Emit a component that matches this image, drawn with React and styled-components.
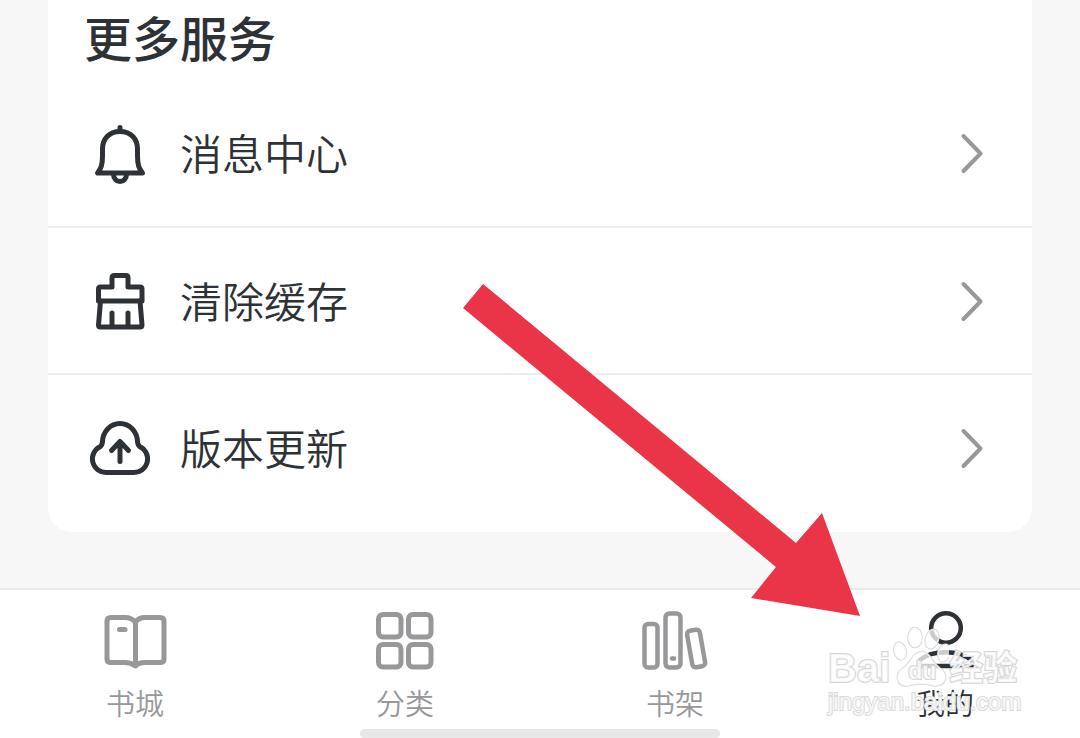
import React from 'react'
import styled, { createGlobalStyle } from 'styled-components'

/***** Component style *****/
const GlobalStyle = createGlobalStyle`
	* {
		box-sizing:border-box;
	}
	body {
		margin:0;
		background-color:#f7f7f7;
		color:#2e3236;
		font-family:"Noto Sans CJK SC", sans-serif;
	}
	button {
		font:inherit;
		color:inherit;
		border:none;
		background:none;
		cursor:pointer;
	}
`
const Page = styled.div`
	position:relative;
	min-height:100vh;
	display:flex;
	flex-direction:column;
	justify-content:space-between;
	overflow:hidden;
`
const Card = styled.section`
	margin:0 48px;
	padding-bottom:12px;
	background-color:#fff;
	border-radius:0 0 24px 24px;
`
const CardTitle = styled.h2`
	margin:0;
	padding:0 36px 8px;
	font-size:48px;
	line-height:72px;
	font-weight:500;
`
const ServiceList = styled.ul`
	margin:0;
	padding:0;
	list-style:none;
`
const ServiceItem = styled.li`
	& + & {
		border-top:2px solid #eeeeee;
	}
`
const ServiceButton = styled.button`
	width:100%;
	height:146px;
	padding:0 48px 0 42px;
	display:flex;
	align-items:center;
	gap:30px;
	text-align:left;

	${ServiceItem} + ${ServiceItem} & {
		height:145px;
	}
`
const ServiceName = styled.span`
	flex:1;
	padding-bottom:2px;
	font-size:42px;
	line-height:60px;
	font-weight:350;
`
const Drawing = styled.svg`
	display:block;
	flex:none;
	overflow:visible;
	fill:none;
	stroke:currentColor;
	stroke-width:${props => props.$stroke || 5};
	stroke-linecap:round;
	stroke-linejoin:round;
`
const Chevron = styled(Drawing)`
	color:#97989b;
`
const BottomBar = styled.footer`
	height:150px;
	display:flex;
	flex-direction:column;
	background-color:#fff;
	border-top:2px solid #e9e9e9;
`
const TabList = styled.nav`
	flex:1;
	display:flex;
`
const Tab = styled.button`
	flex:1;
	padding:16px 0 0;
	display:flex;
	flex-direction:column;
	align-items:center;
	gap:10px;
	color:${props => props.$active ? '#2e3236' : '#97989a'};
`
const TabName = styled.span`
	font-size:29px;
	line-height:40px;
	font-weight:350;
`
const HomeIndicator = styled.div`
	width:33.333%;
	height:9px;
	align-self:center;
	border-radius:5px;
	background-color:#e7e7e7;
`
const Arrow = styled.svg`
	position:absolute;
	right:220px;
	bottom:121px;
	pointer-events:none;
`
const Watermark = styled.div`
	position:absolute;
	right:56px;
	bottom:22px;
	width:196px;
	color:rgba(255, 255, 255, .75);
	font-family:"Liberation Sans", "Noto Sans CJK SC", sans-serif;
	paint-order:stroke fill;
	-webkit-text-stroke:2px #d6d6d6;
	pointer-events:none;
`
const Brand = styled.div`
	height:64px;
	display:flex;
	align-items:flex-end;
	font-size:40px;
	line-height:40px;
	font-weight:bold;
`
const BrandSuffix = styled.span`
	font-size:34px;
	line-height:40px;
`
const Site = styled.div`
	font-size:24px;
	line-height:28px;
	-webkit-text-stroke:2px #dcdcdc;
`
const PawBox = styled.span`
	position:relative;
	width:56px;
	height:64px;
	margin-left:3px;
`
const PawText = styled.span`
	position:absolute;
	left:15px;
	bottom:5px;
	font-size:23px;
	line-height:24px;
`
/****** ******************** *****/

const BellIcon = () => (
	<Drawing width='60' height='60' viewBox='0 0 60 60' aria-hidden='true'>
		<path d='M30 4.500V8M30 8.500C19 8.500 12.500 16 12.500 26V33C12.500 42 11 45.500 7.500 50H52.500C49 45.500 47.500 42 47.500 33V26C47.500 16 41 8.500 30 8.500Z' />
		<path d='M23.500 51.500A6.500 7 0 0 0 36.500 51.500' />
	</Drawing>
)

const BroomIcon = () => (
	<Drawing width='60' height='60' viewBox='0 0 60 60' aria-hidden='true'>
		<path d='M8.500 30V18Q8.500 16 10.500 16H22V7Q22 4.500 24.500 4.500H36Q38 4.500 38 7V16H50Q52 16 52 18V30Z' />
		<path d='M10.500 30L8.500 54Q8.500 56 10.500 56H50Q52 56 52 54L50 30M22 42V55M38 42V55' />
	</Drawing>
)

const CloudIcon = () => (
	<Drawing width='60' height='60' viewBox='0 0 60 60' aria-hidden='true'>
		<path d='M17 54.500A13.600 13.600 0 0 1 10.500 28.500Q12 27 12.500 24A17.500 18.500 0 0 1 47.500 24Q48 27 49.500 28.500A13.600 13.600 0 0 1 43 54.500Z' />
		<path d='M30 43.500V24M21.500 32.500L30 23.500L38.500 32.500' />
	</Drawing>
)

const ChevronIcon = () => (
	<Chevron $stroke={4} width='24' height='40' viewBox='0 0 24 40' aria-hidden='true'>
		<path d='M3.500 3L20.500 20.500L3.500 38' />
	</Chevron>
)

const BookIcon = () => (
	<Drawing width='66' height='66' viewBox='0 0 66 66' aria-hidden='true'>
		<path d='M33.500 16Q29 11.500 23 11.500H9Q5 11.500 5 15V53Q5 56.500 9 56.500H23Q29 56.500 33.500 60Q37 56.500 43 56.500H58Q62 56.500 62 53V15Q62 11.500 58 11.500H43Q37 11.500 33.500 16V59' />
		<path d='M17.500 23.500H23' />
	</Drawing>
)

const GridIcon = () => (
	<Drawing width='66' height='66' viewBox='0 0 66 66' aria-hidden='true'>
		<rect x='6.500' y='8.500' width='22.500' height='22.500' rx='4.500' />
		<rect x='36.500' y='8.500' width='22.500' height='22.500' rx='4.500' />
		<rect x='6.500' y='38.500' width='22.500' height='22.500' rx='4.500' />
		<rect x='36.500' y='38.500' width='22.500' height='22.500' rx='4.500' />
	</Drawing>
)

const ShelfIcon = () => (
	<Drawing $stroke={4.5} width='66' height='66' viewBox='0 0 66 66' aria-hidden='true'>
		<rect x='2.500' y='18' width='13' height='43.500' rx='3.500' />
		<rect x='23.500' y='7.500' width='15' height='54' rx='4' />
		<rect x='47.500' y='24' width='13' height='37' rx='3.500' transform='rotate(-10 54 42)' />
		<path d='M30 52.500H32' />
	</Drawing>
)

const PersonIcon = () => (
	<Drawing $stroke={4.5} width='66' height='66' viewBox='0 0 66 66' aria-hidden='true'>
		<circle cx='34' cy='22' r='14.800' />
		<path d='M9 60C6 60 6 56 8 54C20 43.500 47 43.500 59 54C61 56 61 60 58 60Z' />
	</Drawing>
)

const Paw = () => (
	<svg width='56' height='64' viewBox='0 0 56 64' fill='rgba(255,255,255,.75)' stroke='#d6d6d6' strokeWidth='1.500' aria-hidden='true'>
		<ellipse cx='7' cy='27' rx='6' ry='9' transform='rotate(-12 7 27)' />
		<ellipse cx='22' cy='13.500' rx='7' ry='10' />
		<ellipse cx='39' cy='15' rx='6.500' ry='10' transform='rotate(16 39 15)' />
		<ellipse cx='51' cy='29' rx='6' ry='9' transform='rotate(14 51 29)' />
		<path d='M29 28C19 28 19 38 10 44C1 50 3 62 14 62Q28 58 42 62C54 62 56 50 47 44C38 38 38 28 29 28Z' />
	</svg>
)

const services = [
	{ name: '消息中心', Icon: BellIcon },
	{ name: '清除缓存', Icon: BroomIcon },
	{ name: '版本更新', Icon: CloudIcon },
]

const tabs = [
	{ name: '书城', Icon: BookIcon },
	{ name: '分类', Icon: GridIcon },
	{ name: '书架', Icon: ShelfIcon },
	{ name: '我的', Icon: PersonIcon, active: true },
]

const App = () => {
	return (
		<Page>
			<GlobalStyle />
			<Card>
				<CardTitle>更多服务</CardTitle>
				<ServiceList>
					{services.map(({ name, Icon }) => (
						<ServiceItem key={name}>
							<ServiceButton type='button'>
								<Icon />
								<ServiceName>{name}</ServiceName>
								<ChevronIcon />
							</ServiceButton>
						</ServiceItem>
					))}
				</ServiceList>
			</Card>
			<BottomBar>
				<TabList>
					{tabs.map(({ name, Icon, active }) => (
						<Tab type='button' key={name} $active={active}>
							<Icon />
							<TabName>{name}</TabName>
						</Tab>
					))}
				</TabList>
				<HomeIndicator />
			</BottomBar>
			<Arrow width='398' height='333' viewBox='0 0 398 333' fill='#e93547' aria-hidden='true'>
				<path d='M21 0L334 259L360 229L398 332L289 314L314 283L1 24Z' />
			</Arrow>
			<Watermark>
				<Brand>
					<span>Bai</span>
					<PawBox>
						<Paw />
						<PawText>du</PawText>
					</PawBox>
					<BrandSuffix>经验</BrandSuffix>
				</Brand>
				<Site>jingyan.baidu.com</Site>
			</Watermark>
		</Page>
	)
}

export default App
